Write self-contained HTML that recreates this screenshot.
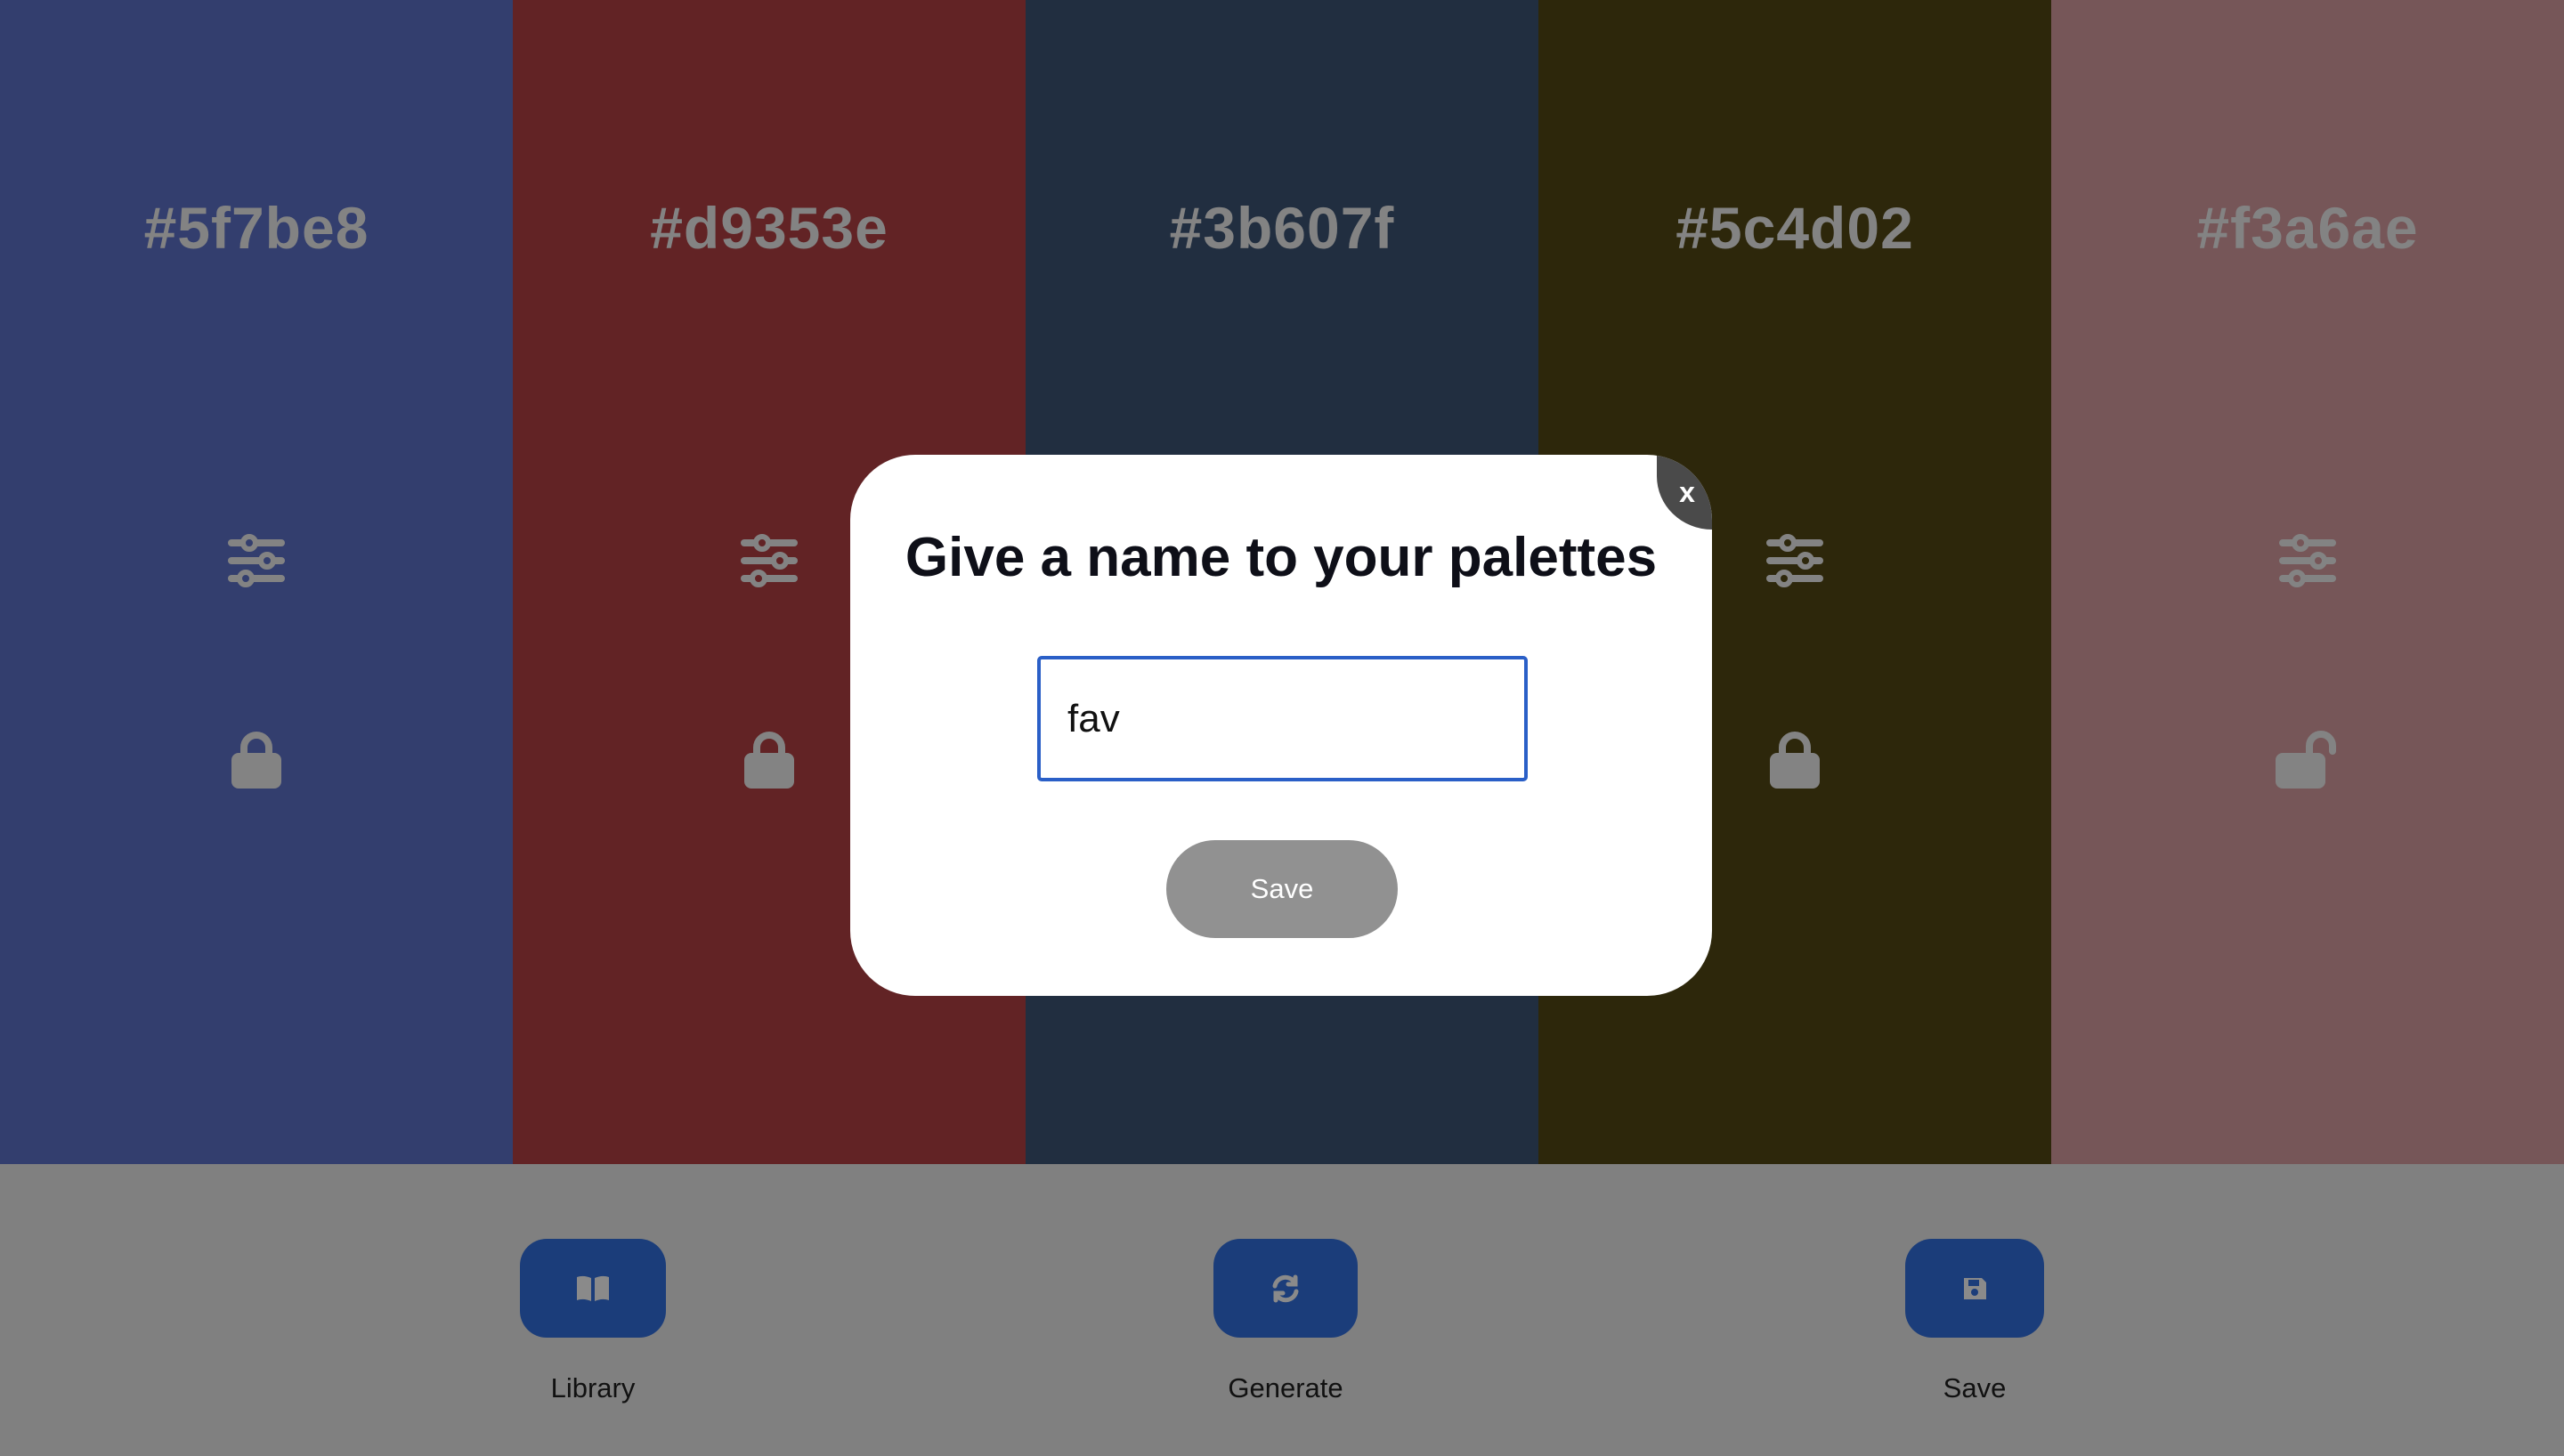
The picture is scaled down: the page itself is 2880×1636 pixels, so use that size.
<!DOCTYPE html>
<html><head><meta charset="utf-8"><style>
*{margin:0;padding:0;box-sizing:border-box}
body{width:2880px;height:1636px;position:relative;overflow:hidden;font-family:"Liberation Sans",Arial,sans-serif;background:#808080}
.col{position:absolute;top:0;height:1308px;width:576px}
.hex{position:absolute;top:218px;left:0;width:100%;text-align:center;font-size:66px;font-weight:bold;color:#838383;letter-spacing:1px}
.sl{position:absolute;left:256px;top:600px}
.lk{position:absolute;left:256px;top:818px}
.bar{position:absolute;top:1308px;left:0;width:2880px;height:328px;background:#808080}
.btn{position:absolute;top:1392px;height:111px;background:#1b3d7a;border-radius:30px;display:flex;align-items:center;justify-content:center}
.lbl{position:absolute;top:1542px;font-size:31px;color:#111;text-align:center;width:300px}
.modal{position:absolute;left:955px;top:511px;width:968px;height:608px;background:#fff;border-radius:73px;overflow:hidden}
.close{position:absolute;right:0;top:0;width:62px;height:84px;background:#4a4a4a;border-bottom-left-radius:62px 60px;color:#fff;font-weight:bold;font-size:32px;display:flex;align-items:center;justify-content:center;padding-left:6px;padding-top:0}
h1{position:absolute;top:80px;left:0;width:100%;text-align:center;font-size:62px;font-weight:bold;color:#0e0f18}
.inp{position:absolute;left:210px;top:226px;width:551px;height:141px;border:4px solid #2a5fc7;border-radius:5px;font-size:44px;color:#111;padding-left:30px;line-height:133px}
.sv{position:absolute;left:355px;top:433px;width:260px;height:110px;background:#919191;border-radius:55px;color:#fff;font-size:31px;display:flex;align-items:center;justify-content:center}
</style></head><body>
<div class="col" style="left:0;background:#333e6e"><div class="hex">#5f7be8</div></div>
<div class="col" style="left:576px;background:#622325"><div class="hex">#d9353e</div></div>
<div class="col" style="left:1152px;background:#212e40"><div class="hex">#3b607f</div></div>
<div class="col" style="left:1728px;background:#2d270b"><div class="hex">#5c4d02</div></div>
<div class="col" style="left:2304px;background:#765658"><div class="hex">#f3a6ae</div></div>

<svg width="0" height="0" style="position:absolute"><defs>
<g id="sli"><g stroke="#838383" stroke-width="8" stroke-linecap="round"><line x1="4" y1="10" x2="60" y2="10"/><line x1="4" y1="30" x2="60" y2="30"/><line x1="4" y1="50" x2="60" y2="50"/></g>
<g stroke="#838383" stroke-width="6"><circle cx="24" cy="10" r="7"/><circle cx="44" cy="30" r="7"/><circle cx="20" cy="50" r="7"/></g></g>
</defs></svg>

<!-- sliders -->
<svg class="sl" style="left:256px" width="64" height="60"><use href="#sli" fill="#333e6e"/></svg>
<svg class="sl" style="left:832px" width="64" height="60"><use href="#sli" fill="#622325"/></svg>
<svg class="sl" style="left:1984px" width="64" height="60"><use href="#sli" fill="#2d270b"/></svg>
<svg class="sl" style="left:2560px" width="64" height="60"><use href="#sli" fill="#765658"/></svg>

<!-- locks -->
<svg class="lk" style="left:256px" width="64" height="72"><path d="M18 30V22a14 14 0 0 1 28 0v8" fill="none" stroke="#838383" stroke-width="8"/><rect x="4" y="28" width="56" height="40" rx="8" fill="#838383"/></svg>
<svg class="lk" style="left:832px" width="64" height="72"><path d="M18 30V22a14 14 0 0 1 28 0v8" fill="none" stroke="#838383" stroke-width="8"/><rect x="4" y="28" width="56" height="40" rx="8" fill="#838383"/></svg>
<svg class="lk" style="left:1984px" width="64" height="72"><path d="M18 30V22a14 14 0 0 1 28 0v8" fill="none" stroke="#838383" stroke-width="8"/><rect x="4" y="28" width="56" height="40" rx="8" fill="#838383"/></svg>
<svg class="lk" style="left:2552px" width="80" height="72"><path d="M42 32V20a13 13 0 0 1 26 0v6" fill="none" stroke="#838383" stroke-width="8" stroke-linecap="round"/><rect x="4" y="28" width="56" height="40" rx="8" fill="#838383"/></svg>

<div class="bar"></div>
<div class="btn" style="left:584px;width:164px"><svg width="40" height="32" viewBox="0 0 40 32"><path d="M2 3c6-2 11-1 16 1v26c-5-2-10-3-16-1z M22 4c5-2 10-3 16-1v26c-6-2-11-1-16 1z" fill="#8a8a8a"/></svg></div>
<div class="btn" style="left:1363px;width:162px"><svg width="36" height="36" viewBox="0 0 36 36" fill="none" stroke="#8a8a8a" stroke-width="5" stroke-linecap="round"><path d="M6 15a12 12 0 0 1 22-4"/><path d="M29 5v8h-8"/><path d="M30 21a12 12 0 0 1-22 4"/><path d="M7 31v-8h8"/></svg></div>
<div class="btn" style="left:2140px;width:156px"><svg width="32" height="32" viewBox="0 0 32 32"><path d="M4 4h20l5 5v19H4z" fill="#8a8a8a"/><rect x="9" y="6" width="12" height="7" fill="#1b3d7a"/><circle cx="16" cy="20" r="4" fill="#1b3d7a"/></svg></div>
<div class="lbl" style="left:516px">Library</div>
<div class="lbl" style="left:1294px">Generate</div>
<div class="lbl" style="left:2068px">Save</div>

<div class="modal">
<div class="close">x</div>
<h1>Give a name to your palettes</h1>
<div class="inp">fav</div>
<div class="sv">Save</div>
</div>
</body></html>
